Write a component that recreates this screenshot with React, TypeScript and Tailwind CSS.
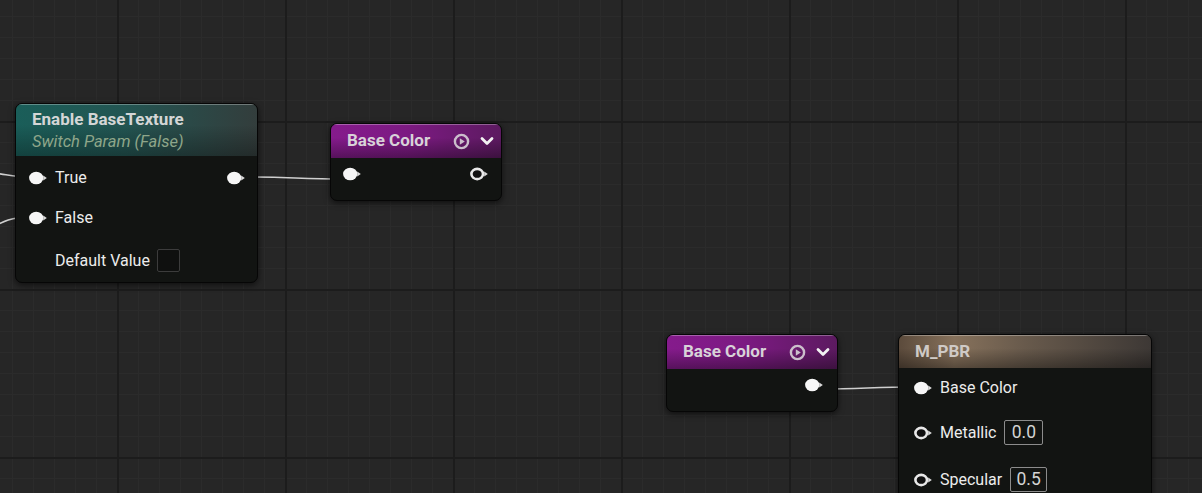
import React from 'react';

type PinKind = 'filled' | 'hollow';

// Material graph pin: circle plus the little arrow on its right
const Pin: React.FC<{ kind?: PinKind }> = ({ kind = 'filled' }) => (
  <svg width="19" height="14" viewBox="0 0 19 14" className="shrink-0">
    {kind === 'filled' ? (
      <ellipse cx="7.2" cy="7" rx="7.1" ry="6.3" fill="#f6f6f6" />
    ) : (
      <ellipse cx="7.2" cy="7" rx="5.8" ry="5.1" fill="#111" stroke="#e8e8e8" strokeWidth="2.6" />
    )}
    <path d="M14.2 4.4 L17.8 7 L14.2 9.6 Z" fill="#dcdcdc" />
  </svg>
);

const PlayIcon = () => (
  <svg width="17" height="17" viewBox="0 0 17 17">
    <circle cx="8.5" cy="8.5" r="6.6" fill="none" stroke="#cbbecb" strokeWidth="2.4" />
    <path d="M6.8 5.2 L11.8 8.5 L6.8 11.8 Z" fill="#cbbecb" />
  </svg>
);

const ChevronIcon = () => (
  <svg width="16" height="16" viewBox="0 0 16 16">
    <path d="M3 5.5 L8 10.5 L13 5.5" fill="none" stroke="#f2f2f2" strokeWidth="2.8" strokeLinecap="round" strokeLinejoin="round" />
  </svg>
);

const ValueBox: React.FC<{ value: string; width: string }> = ({ value, width }) => (
  <div className={`ml-[8px] h-[25px] ${width} flex items-center justify-center border border-[#8c8c8c] rounded-[2px] text-[17.5px] text-[#d4d4d4]`}>
    {value}
  </div>
);

const BaseColorNode: React.FC<{ showInput?: boolean; hollowOut?: boolean; outPad: string }> = ({ showInput, hollowOut, outPad }) => (
  <div className="w-[172px] h-[78px] rounded-[7px] overflow-hidden bg-[#121412] border border-[#060606] shadow-[0_2px_6px_rgba(0,0,0,0.6)] flex flex-col">
    <div className="relative h-[34px] shrink-0 flex items-center pl-[16px] pr-[6px] bg-[linear-gradient(to_right,#851b8c_0%,#7c1a82_45%,#5c1a60_100%)] shadow-[inset_0_1px_0_rgba(255,255,255,0.3)]">
      <div className="absolute inset-0 bg-[linear-gradient(to_bottom,rgba(0,0,0,0)_40%,rgba(0,0,0,0.35)_100%)]" />
      <span className="relative flex-1 text-[17px] font-bold text-[#d8d2d8]">Base Color</span>
      <div className="relative flex items-center gap-[9px]">
        <PlayIcon />
        <ChevronIcon />
      </div>
    </div>
    <div className={`flex-1 flex items-center pt-[9px] pb-[21px] pl-[12px] ${outPad} ${showInput ? 'justify-between' : 'justify-end'}`}>
      {showInput && <Pin />}
      <Pin kind={hollowOut ? 'hollow' : 'filled'} />
    </div>
  </div>
);

export default function App() {
  return (
    <div className="relative w-[1202px] h-[493px] overflow-hidden bg-[#262626] bg-[image:linear-gradient(to_right,#1c1c1c_2px,transparent_2px),linear-gradient(to_bottom,#1c1c1c_2px,transparent_2px),linear-gradient(to_right,#2b2b2b_1px,transparent_1px),linear-gradient(to_bottom,#2b2b2b_1px,transparent_1px)] bg-size-[168px_168px,168px_168px,21px_21px,21px_21px] bg-position-[117px_121px,117px_121px,12px_16px,12px_16px] font-['Roboto','Liberation_Sans',sans-serif]">
      {/* wires */}
      <svg className="absolute inset-0" width="1202" height="493">
        <g fill="none" stroke="#cfcfcf" strokeWidth="1.6">
          <path d="M-20 172 C4 173 10 177 30 177" />
          <path d="M-30 238 C0 224 6 217 30 217" />
          <path d="M244 177 C290 177 300 179 344 179" />
          <path d="M822 389 C860 389 875 387 915 387" />
        </g>
      </svg>

      {/* Enable BaseTexture switch param */}
      <div className="absolute left-[15px] top-[103px] w-[243px] h-[180px] rounded-[7px] overflow-hidden bg-[#121412] border border-[#060606] shadow-[0_2px_6px_rgba(0,0,0,0.6)] flex flex-col">
        <div className="relative h-[52px] shrink-0 pl-[16px] pt-[5px] bg-[linear-gradient(to_right,#1a5e59_0%,#235552_45%,#333d3c_100%)] shadow-[inset_0_1px_0_rgba(255,255,255,0.3)]">
          <div className="absolute inset-0 bg-[linear-gradient(to_bottom,rgba(0,0,0,0)_40%,rgba(0,0,0,0.3)_100%)]" />
          <div className="relative text-[17px] leading-[20px] font-bold text-[#d4d6d6]">Enable BaseTexture</div>
          <div className="relative mt-[3px] text-[16.5px] leading-[20px] italic text-[#8ea68a]">Switch Param (False)</div>
        </div>
        <div className="flex flex-col pt-[10px] pl-[13px] pr-[11px]">
          <div className="h-[24px] flex items-center justify-between">
            <div className="flex items-center">
              <Pin />
              <span className="ml-[7px] text-[16px] text-[#ececec]">True</span>
            </div>
            <Pin />
          </div>
          <div className="mt-[16px] h-[24px] flex items-center">
            <Pin />
            <span className="ml-[7px] text-[16px] text-[#ececec]">False</span>
          </div>
          <div className="mt-[18px] h-[25px] flex items-center pl-[26px]">
            <span className="text-[16px] text-[#ececec]">Default Value</span>
            <div className="ml-[7px] w-[23px] h-[23px] rounded-[2px] border border-[#3c3c3c] bg-[#0f100f]" />
          </div>
        </div>
      </div>

      <div className="absolute left-[330px] top-[123px]">
        <BaseColorNode showInput hollowOut outPad="pr-[12px]" />
      </div>

      <div className="absolute left-[666px] top-[334px]">
        <BaseColorNode outPad="pr-[13px]" />
      </div>

      {/* M_PBR material result node */}
      <div className="absolute left-[898px] top-[334px] w-[254px] h-[180px] rounded-[7px] overflow-hidden bg-[#121412] border border-[#060606] shadow-[0_2px_6px_rgba(0,0,0,0.6)] flex flex-col">
        <div className="relative h-[33px] shrink-0 flex items-center pl-[16px] bg-[linear-gradient(to_right,#5c4b3c_0%,#86715b_22%,#685a4c_50%,#3d3835_100%)] shadow-[inset_0_1px_0_rgba(255,255,255,0.3)]">
          <div className="absolute inset-0 bg-[linear-gradient(to_bottom,rgba(0,0,0,0)_40%,rgba(0,0,0,0.35)_100%)]" />
          <span className="relative text-[17px] font-bold text-[#cfcac6]">M_PBR</span>
        </div>
        <div className="flex flex-col pt-[8px] pl-[15px]">
          <div className="h-[24px] flex items-center">
            <Pin />
            <span className="ml-[7px] text-[16px] text-[#ececec]">Base Color</span>
          </div>
          <div className="mt-[20px] h-[25px] flex items-center">
            <Pin kind="hollow" />
            <span className="ml-[7px] text-[16px] text-[#ececec]">Metallic</span>
            <ValueBox value="0.0" width="w-[39px]" />
          </div>
          <div className="mt-[22px] h-[25px] flex items-center">
            <Pin kind="hollow" />
            <span className="ml-[7px] text-[16px] text-[#ececec]">Specular</span>
            <ValueBox value="0.5" width="w-[37px]" />
          </div>
        </div>
      </div>
    </div>
  );
}
